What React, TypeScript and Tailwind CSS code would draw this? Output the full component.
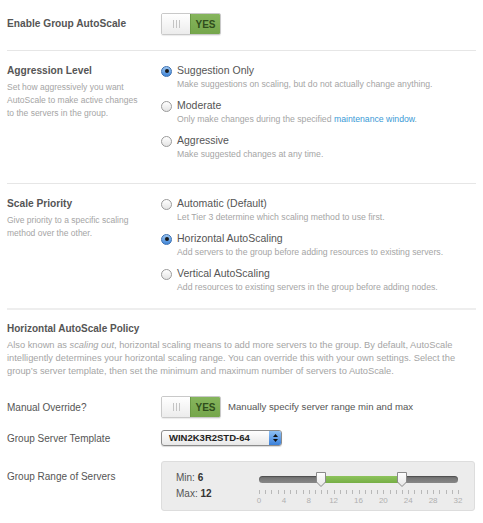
import React from "react";

const font = { fontFamily: '"Liberation Sans", Arial, sans-serif' };

function Toggle() {
  return (
    <div className="flex h-[22px] w-[60px] overflow-hidden rounded-[2px] border border-[#c9c9c9] shadow-[0_1px_1px_rgba(0,0,0,0.08)]">
      <div className="flex w-[28px] items-center justify-center gap-[2px] bg-gradient-to-b from-[#ffffff] to-[#ececec]">
        <span className="h-[8px] w-px bg-[#c4c4c4]" />
        <span className="h-[8px] w-px bg-[#c4c4c4]" />
        <span className="h-[8px] w-px bg-[#c4c4c4]" />
      </div>
      <div className="flex flex-1 items-center justify-center border-l border-[#6a9a45] bg-gradient-to-b from-[#86b55d] to-[#75a64b] text-[10px] font-bold text-[#2f4d1c]">
        YES
      </div>
    </div>
  );
}

function Radio({ checked }: { checked?: boolean }) {
  if (checked) {
    return (
      <span className="flex h-[11px] w-[11px] shrink-0 items-center justify-center rounded-full border border-[#3b6fb0] bg-gradient-to-b from-[#9cc6f2] to-[#3f86d8]">
        <span className="h-[4px] w-[4px] rounded-full bg-[#1a1a1a]" />
      </span>
    );
  }
  return (
    <span className="h-[11px] w-[11px] shrink-0 rounded-full border border-[#9a9a9a] bg-gradient-to-b from-[#ffffff] to-[#e4e4e4]" />
  );
}

function Option({
  checked,
  label,
  children,
}: {
  checked?: boolean;
  label: string;
  children: React.ReactNode;
}) {
  return (
    <div>
      <div className="flex h-[14px] items-center gap-[5px]">
        <Radio checked={checked} />
        <span className="text-[10.5px] text-[#555]">{label}</span>
      </div>
      <p className="ml-[16px] h-[12px] text-[8.7px] leading-[12px] text-[#a5a5a5]">{children}</p>
    </div>
  );
}

function Slider() {
  const ticks = Array.from({ length: 33 }, (_, i) => i);
  const nums = [0, 4, 8, 12, 16, 20, 24, 28, 32];
  const pos = (v: number) => (v / 32) * 100;
  return (
    <div className="relative h-[38px] w-[199px]">
      <div className="absolute left-0 right-0 top-[6px] h-[7px] rounded-full bg-gradient-to-b from-[#6e6e6e] to-[#888] shadow-[inset_0_1px_1px_rgba(0,0,0,0.3)]" />
      <div
        className="absolute top-[6px] h-[7px] bg-gradient-to-b from-[#8dc35c] to-[#76ae45]"
        style={{ left: `${pos(10)}%`, width: `${pos(23) - pos(10)}%` }}
      />
      {[10, 23].map((v) => (
        <svg
          key={v}
          className="absolute top-[1px]"
          style={{ left: `calc(${pos(v)}% - 6px)` }}
          width="12"
          height="17"
          viewBox="0 0 12 17"
        >
          <defs>
            <linearGradient id={`g${v}`} x1="0" y1="0" x2="0" y2="1">
              <stop offset="0" stopColor="#ffffff" />
              <stop offset="1" stopColor="#e6e6e6" />
            </linearGradient>
          </defs>
          <path d="M1.5 1.5 H10.5 V11 L6 15.5 L1.5 11 Z" fill={`url(#g${v})`} stroke="#8a8a8a" strokeWidth="1" />
        </svg>
      ))}
      {ticks.map((t) => (
        <span
          key={t}
          className="absolute top-[20px] h-[4px] w-px bg-[#b8b8b8]"
          style={{ left: `${pos(t)}%` }}
        />
      ))}
      {nums.map((n) => (
        <span
          key={n}
          className="absolute top-[26px] -translate-x-1/2 text-[8px] leading-[10px] text-[#b0b0b0]"
          style={{ left: `${pos(n)}%` }}
        >
          {n}
        </span>
      ))}
    </div>
  );
}

export default function App() {
  return (
    <div className="min-h-[523px] w-[483px] bg-white" style={font}>
      {/* Enable */}
      <div className="mx-[7px] flex items-center border-b border-[#e6e6e6] pb-[15px] pt-[13px]">
        <div className="w-[154px] text-[10.2px] font-bold text-[#555]">Enable Group AutoScale</div>
        <Toggle />
      </div>

      {/* Aggression level */}
      <div className="mx-[7px] flex border-b border-[#e6e6e6] pb-[23px] pt-[13px]">
        <div className="w-[154px]">
          <h3 className="text-[10.2px] font-bold leading-[14px] text-[#555]">Aggression Level</h3>
          <p className="mt-[3px] pr-[20px] text-[8.5px] leading-[13px] text-[#a5a5a5]">
            Set how aggressively you want AutoScale to make active changes to the servers in the group.
          </p>
        </div>
        <div className="flex flex-col gap-[9px]">
          <Option checked label="Suggestion Only">
            Make suggestions on scaling, but do not actually change anything.
          </Option>
          <Option label="Moderate">
            Only make changes during the specified <span className="text-[#3a9ad6]">maintenance window</span>.
          </Option>
          <Option label="Aggressive">Make suggested changes at any time.</Option>
        </div>
      </div>

      {/* Scale priority */}
      <div className="mx-[7px] flex border-b-2 border-[#eeeeee] pb-[15px] pt-[13px]">
        <div className="w-[154px]">
          <h3 className="text-[10.2px] font-bold leading-[14px] text-[#555]">Scale Priority</h3>
          <p className="mt-[3px] pr-[20px] text-[8.5px] leading-[13px] text-[#a5a5a5]">
            Give priority to a specific scaling method over the other.
          </p>
        </div>
        <div className="flex flex-col gap-[9px]">
          <Option label="Automatic (Default)">Let Tier 3 determine which scaling method to use first.</Option>
          <Option checked label="Horizontal AutoScaling">
            Add servers to the group before adding resources to existing servers.
          </Option>
          <Option label="Vertical AutoScaling">
            Add resources to existing servers in the group before adding nodes.
          </Option>
        </div>
      </div>

      {/* Horizontal policy */}
      <div className="mx-[7px] pt-[12px]">
        <h3 className="text-[10px] font-bold leading-[14px] text-[#555]">Horizontal AutoScale Policy</h3>
        <p className="mt-[3px] text-[9.3px] leading-[13px] text-[#a5a5a5]">
          Also known as <em>scaling out</em>, horizontal scaling means to add more servers to the group. By default,
          AutoScale intelligently determines your horizontal scaling range. You can override this with your own
          settings. Select the group’s server template, then set the minimum and maximum number of servers to
          AutoScale.
        </p>

        <div className="mt-[18px] flex items-center">
          <div className="w-[154px] text-[10px] text-[#555]">Manual Override?</div>
          <Toggle />
          <span className="ml-[7px] text-[9.6px] text-[#555]">Manually specify server range min and max</span>
        </div>

        <div className="mt-[12px] flex items-center">
          <div className="w-[154px] text-[10px] text-[#555]">Group Server Template</div>
          <div className="flex h-[16px] w-[121px] items-center overflow-hidden rounded-[3px] border border-[#8c8c8c] bg-gradient-to-b from-[#ffffff] to-[#e8e8e8] shadow-[0_1px_1px_rgba(0,0,0,0.15)]">
            <span className="flex-1 pl-[7px] text-[9.5px] font-bold text-[#222]">WIN2K3R2STD-64</span>
            <span className="flex h-full w-[12px] flex-col items-center justify-center gap-[2px] bg-gradient-to-b from-[#8ec0f4] to-[#3a80d9]">
              <svg width="5" height="3" viewBox="0 0 5 3">
                <path d="M0 3 L2.5 0 L5 3 Z" fill="#111" />
              </svg>
              <svg width="5" height="3" viewBox="0 0 5 3">
                <path d="M0 0 L2.5 3 L5 0 Z" fill="#111" />
              </svg>
            </span>
          </div>
        </div>

        <div className="mt-[15px] flex items-start">
          <div className="w-[154px] pt-[9px] text-[10px] leading-[14px] text-[#555]">Group Range of Servers</div>
          <div className="flex h-[50px] w-[314px] items-start rounded-[3px] border border-[#dddddd] bg-[#ececec] pl-[14px] pt-[8px]">
            <div className="w-[83px] text-[10px] leading-[16px] text-[#555]">
              <div>
                Min: <b className="text-[#333]">6</b>
              </div>
              <div>
                Max: <b className="text-[#333]">12</b>
              </div>
            </div>
            <Slider />
          </div>
        </div>
      </div>
    </div>
  );
}
